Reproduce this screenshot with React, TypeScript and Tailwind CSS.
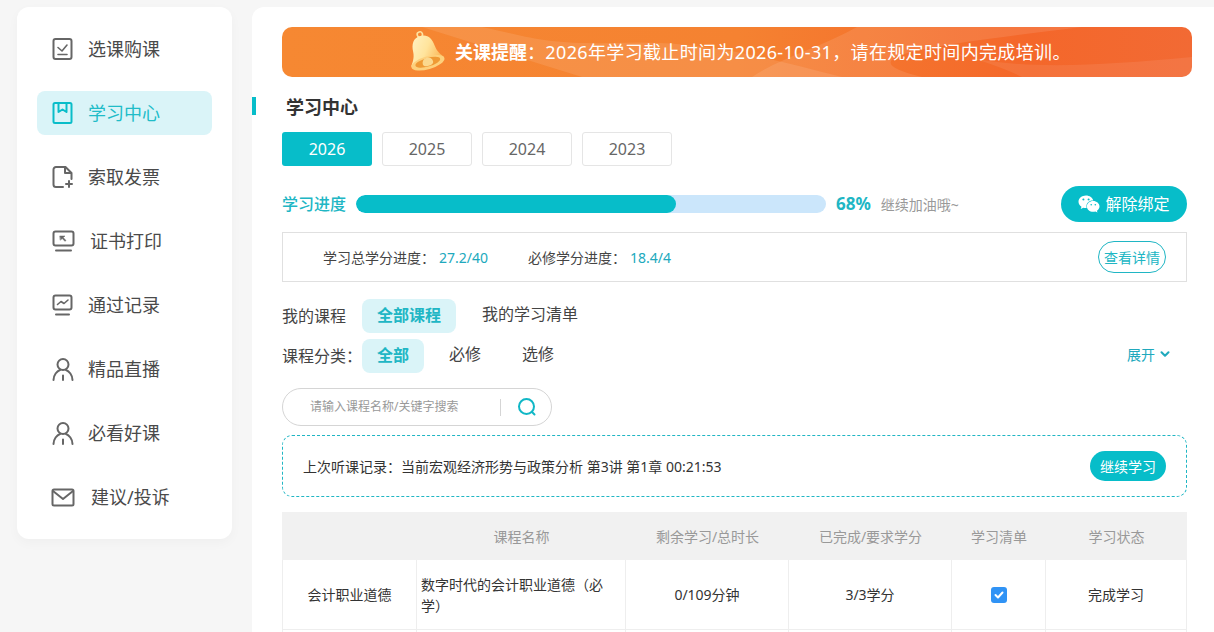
import React from 'react';
import { ChevronDown } from 'lucide-react';
import { FaWeixin } from 'react-icons/fa';

const font = { fontFamily: '"Noto Sans", "Noto Sans CJK SC", sans-serif' };

// ---- sidebar icons ----

const iconProps = {
  width: 24,
  height: 24,
  viewBox: '0 0 24 24',
  fill: 'none',
  stroke: 'currentColor',
  strokeWidth: 2,
  strokeLinecap: 'round' as const,
  strokeLinejoin: 'round' as const,
};

const CheckBoxIcon = () => (
  <svg {...iconProps}>
    <rect x="2.500" y="2" width="18" height="20" rx="2" />
    <path d="M7 10.500l4 3.500 5-6M7 17.500h9" strokeWidth="1.600" />
  </svg>
);

const BookIcon = () => (
  <svg {...iconProps}>
    <rect x="2.500" y="2" width="18" height="20" rx="1.500" />
    <path d="M7.500 2v9l4-2.500 4 2.500V2" />
  </svg>
);

const InvoiceIcon = () => (
  <svg {...iconProps}>
    <path d="M12 22H5a2.500 2.500 0 0 1-2.500-2.500V4.500A2.500 2.500 0 0 1 5 2h9.500l6 6v6" />
    <path d="M14 2v6h6M18 16v6M15 19h6" />
  </svg>
);

const ScreenIcon = () => (
  <svg {...iconProps}>
    <rect x="2.500" y="2.500" width="20" height="14" rx="2" />
    <path d="M5 21.500h15" />
    <path d="M9 7h5l-1.800 1.600L15 11.500l-1 .8-2.800-2.700L9.500 11z" fill="currentColor" strokeWidth="0.500" />
  </svg>
);

const ChartIcon = () => (
  <svg {...iconProps}>
    <rect x="2.500" y="2.500" width="18" height="14" rx="2" />
    <path d="M5 21.500h13" />
    <path d="M6.500 11.500l3.500-3 3 2 4-3.500" strokeWidth="1.600" />
  </svg>
);

const PersonIcon = () => (
  <svg {...iconProps}>
    <circle cx="12" cy="7.500" r="5.500" />
    <path d="M2.500 23c0-5 3.500-9 6.500-10M21.500 23c0-5-3.500-9-6.500-10M12 18.500V23" />
  </svg>
);

const MailIcon = () => (
  <svg {...iconProps} width={24} height={19} viewBox="0 0 24 19">
    <rect x="1.500" y="1.500" width="21" height="16" rx="1.500" />
    <path d="M2 3l10 8 10-8" />
  </svg>
);

const menu = [
  { label: '选课购课', icon: <CheckBoxIcon />, textClass: '' },
  { label: '学习中心', icon: <BookIcon />, textClass: '', active: true },
  { label: '索取发票', icon: <InvoiceIcon />, textClass: '' },
  { label: '证书打印', icon: <ScreenIcon />, textClass: 'ml-[2px]' },
  { label: '通过记录', icon: <ChartIcon />, textClass: '' },
  { label: '精品直播', icon: <PersonIcon />, textClass: '' },
  { label: '必看好课', icon: <PersonIcon />, textClass: '' },
  { label: '建议/投诉', icon: <MailIcon />, textClass: 'ml-[3px]' },
];

function Sidebar() {
  return (
    <aside className="w-[215px] h-[532px] shrink-0 rounded-xl bg-white px-5 py-5 flex flex-col gap-5 shadow-[0_4px_12px_rgba(0,0,0,0.03)]">
      {menu.map(item => (
        <div
          key={item.label}
          className={
            item.active
              ? 'h-11 rounded-lg bg-[#daf4f8] flex items-center pl-[14px] text-[#0abdc9]'
              : 'h-11 rounded-lg flex items-center pl-[14px] text-[#666666]'
          }
        >
          <span className="w-[37px] shrink-0 flex items-center">{item.icon}</span>
          <span
            className={
              (item.active ? 'text-[#20bcc8] ' : 'text-[#4a4a4a] ') +
              'text-[18px] leading-6 ' +
              item.textClass
            }
          >
            {item.label}
          </span>
        </div>
      ))}
    </aside>
  );
}

// ---- notice banner ----

const Bell = () => (
  <svg width="42" height="47" viewBox="0 0 38 44" className="shrink-0">
    <defs>
      <linearGradient id="bellBody" x1="0" y1="0" x2="1" y2="0.700">
        <stop offset="0" stopColor="#fff6cf" />
        <stop offset="0.600" stopColor="#ffe49c" />
        <stop offset="1" stopColor="#fbb95a" />
      </linearGradient>
    </defs>
    <g transform="rotate(-16 19 22)">
      <circle cx="19" cy="4.500" r="2.500" fill="none" stroke="#fde3a0" strokeWidth="1.500" />
      <path d="M19 6c-7 0-10 5-10.500 12.500-.4 6-3.500 9.500-5.500 12.500 5 4.500 27 4.500 32 0-2-3-5.100-6.500-5.500-12.500C29 11 26 6 19 6z" fill="url(#bellBody)" />
      <ellipse cx="19" cy="32" rx="16" ry="6" fill="#fdd07c" />
      <ellipse cx="19" cy="31.500" rx="12" ry="4" fill="#ef9a35" />
      <path d="M14 32a5 5 0 0 1 10 0c0 2-2 3-5 3s-5-1-5-3z" fill="#fbd88e" />
    </g>
  </svg>
);

function Banner() {
  return (
    <div className="relative overflow-hidden h-[50px] w-[910px] rounded-[10px] flex items-center pl-[122px] text-white text-[18px] bg-[linear-gradient(90deg,#f68832_0%,#f58231_50%,#f4672a_82%,#f26a34_100%)]">
      <svg viewBox="0 0 910 50" preserveAspectRatio="none" className="absolute inset-0 w-full h-full">
        <path d="M140 0L300 50L560 50C480 30 420 12 330 16C260 18 240 8 200 0Z" fill="#ffffff" fillOpacity="0.1" />
        <path d="M575 0C540 20 500 30 470 50L640 50C560 30 640 20 800 0Z" fill="#ffffff" fillOpacity="0.1" />
        <path d="M650 20C720 45 800 40 910 30L910 50L740 50C720 40 690 30 650 20Z" fill="#ffffff" fillOpacity="0.08" />
      </svg>
      <span className="relative flex items-center gap-[9px]">
        <Bell />
        <span className="leading-6 whitespace-nowrap tracking-[0.35px]">
          <b className="font-bold tracking-normal">关课提醒</b>：2026年学习截止时间为2026-10-31，请在规定时间内完成培训。
        </span>
      </span>
    </div>
  );
}

// ---- content bits ----

const years = ['2026', '2025', '2024', '2023'];

function YearTabs() {
  return (
    <div className="flex gap-[10px] mt-[17px]">
      {years.map((y, i) => (
        <div
          key={y}
          className={
            i === 0
              ? 'w-[90px] h-[34px] rounded-[3px] bg-[#07bdc9] text-white text-[16px] flex items-center justify-center'
              : 'w-[90px] h-[34px] rounded-[3px] border border-[#e5e5e5] text-[#666666] text-[16px] flex items-center justify-center'
          }
        >
          {y}
        </div>
      ))}
    </div>
  );
}

function Progress() {
  return (
    <div className="flex items-center mt-5 h-9">
      <span className="w-[74px] text-[16px] font-medium text-[#20b6c4] leading-6">学习进度</span>
      <div className="w-[470px] h-[18px] rounded-full bg-[#cbe6fb] overflow-hidden">
        <div className="h-full rounded-full bg-[#07bdc9]" style={{ width: `${(320 / 470) * 100}%` }} />
      </div>
      <span className="ml-[10px] text-[17px] font-bold text-[#20b6c4]">68%</span>
      <span className="ml-[10px] text-[14px] text-[#999999]">继续加油哦~</span>
      <div className="ml-auto w-[126px] h-9 rounded-full bg-[#07bdc9] text-white flex items-center justify-center gap-[5px] text-[16px]">
        <FaWeixin size={22} />
        解除绑定
      </div>
    </div>
  );
}

function Credits() {
  return (
    <div className="h-[50px] mt-[10px] border border-[#e0e0e0] flex items-center pl-10 pr-5 text-[14px] text-[#444444]">
      <span>学习总学分进度：</span>
      <span className="ml-[4px] text-[#20a9bd]">27.2/40</span>
      <span className="ml-10">必修学分进度：</span>
      <span className="ml-[4px] text-[#20a9bd]">18.4/4</span>
      <div className="ml-auto w-[68px] h-8 rounded-full border border-[#20b6c4] text-[#20b6c4] flex items-center justify-center whitespace-nowrap">
        查看详情
      </div>
    </div>
  );
}

function Filters() {
  return (
    <div className="mt-[17px] flex flex-col gap-[6px] text-[16px] text-[#444444]">
      <div className="flex items-center h-[34px]">
        <span className="w-[80px]">我的课程</span>
        <span className="w-[94px] h-[34px] pb-[3px] rounded-lg bg-[#daf4f8] text-[#20b6c4] font-bold flex items-center justify-center">
          全部课程
        </span>
        <span className="ml-[26px] -translate-y-[2px]">我的学习清单</span>
      </div>
      <div className="flex items-center h-[34px]">
        <span className="w-[80px]">课程分类：</span>
        <span className="w-[62px] h-[34px] pb-[3px] rounded-lg bg-[#daf4f8] text-[#20b6c4] font-bold flex items-center justify-center">
          全部
        </span>
        <span className="ml-[25px] -translate-y-[2px]">必修</span>
        <span className="ml-[41px] -translate-y-[2px]">选修</span>
        <span className="ml-auto mr-[15px] flex items-center gap-[3px] text-[14px] text-[#20a9bd] -translate-y-[2px]">
          展开
          <ChevronDown size={14} strokeWidth={3.500} />
        </span>
      </div>
    </div>
  );
}

function SearchBox() {
  return (
    <div className="mt-[15px] w-[270px] h-[38px] rounded-full border border-[#d5d5d5] flex items-center pl-[27px]">
      <input
        placeholder="请输入课程名称/关键字搜索"
        className="w-[190px] text-[12px] outline-none placeholder:text-[#999999]"
      />
      <span className="w-px h-[17px] bg-[#d5d5d5]" />
      <svg width="20" height="20" viewBox="0 0 20 20" fill="none" stroke="#10b7c6" strokeWidth="2" strokeLinecap="round" className="ml-4">
        <circle cx="9.500" cy="9.500" r="7.500" />
        <path d="M15 15l2.500 2.500" />
      </svg>
    </div>
  );
}

function LastRecord() {
  return (
    <div className="mt-[9px] h-[62px] rounded-[10px] border border-dashed border-[#20b6c4] flex items-center pl-[20px] pr-5 text-[14px] text-[#333333]">
      <span>上次听课记录：当前宏观经济形势与政策分析 第3讲 第1章 00:21:53</span>
      <span className="ml-auto w-[76px] h-[30px] rounded-full bg-[#07bdc9] text-white flex items-center justify-center">
        继续学习
      </span>
    </div>
  );
}

// ---- course table ----

const headers = ['', '课程名称', '剩余学习/总时长', '已完成/要求学分', '学习清单', '学习状态'];
const gridCols = 'grid grid-cols-[135px_209px_163px_163px_94px_141px]';

const CheckMark = () => (
  <span className="w-4 h-4 rounded-[3px] bg-[#3093f5] flex items-center justify-center">
    <svg width="10" height="8" viewBox="0 0 10 8" fill="none" stroke="#ffffff" strokeWidth="2" strokeLinecap="round" strokeLinejoin="round">
      <path d="M1.500 4l2.500 2.500 4.500-5" />
    </svg>
  </span>
);

function CourseTable() {
  const cell = 'border-r border-b border-[#eeeeee] flex items-center justify-center';
  return (
    <div className="mt-[15px] text-[14px]">
      <div className={`${gridCols} h-[48px] bg-[#f1f1f1] text-[#999999]`}>
        {headers.map(h => (
          <div key={h} className="flex items-center justify-center">
            {h}
          </div>
        ))}
      </div>
      <div className={`${gridCols} h-[70px] text-[#333333]`}>
        <div className={`${cell} border-l`}>会计职业道德</div>
        <div className={`${cell} !justify-start pl-[4px] pr-[12px] leading-[21px]`}>数字时代的会计职业道德（必学）</div>
        <div className={cell}>0/109分钟</div>
        <div className={cell}>3/3学分</div>
        <div className={cell}>
          <CheckMark />
        </div>
        <div className={cell}>完成学习</div>
      </div>
      <div className={`${gridCols} h-[70px]`}>
        {headers.map((h, i) => (
          <div key={h} className={i === 0 ? `${cell} border-l` : cell} />
        ))}
      </div>
    </div>
  );
}

export default function App() {
  return (
    <div style={font} className="w-[1214px] h-[632px] overflow-hidden bg-[#f6f6f6] flex items-start pt-[7px] pl-[17px] gap-5">
      <Sidebar />
      <main className="flex-1 h-[700px] bg-white rounded-tl-xl pt-5">
        <div className="pl-[30px]">
          <Banner />
        </div>
        <div className="flex items-center mt-5 h-[18px]">
          <span className="w-1 h-[18px] bg-[#07bdc9]" />
          <h1 className="ml-[30px] text-[18px] font-bold text-[#333333] leading-6 translate-y-px">学习中心</h1>
        </div>
        <div className="pl-[30px] pr-[27px]">
          <YearTabs />
          <Progress />
          <Credits />
          <Filters />
          <SearchBox />
          <LastRecord />
          <CourseTable />
        </div>
      </main>
    </div>
  );
}
